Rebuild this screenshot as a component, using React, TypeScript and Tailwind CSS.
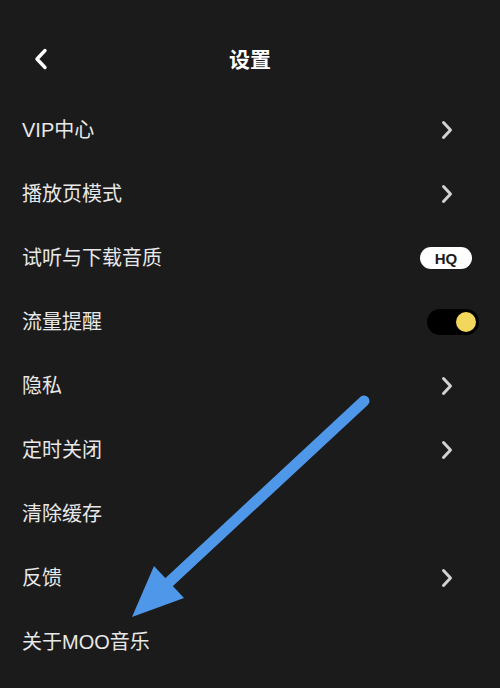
import React from "react";

const Chevron = () => (
  <svg width="12" height="20" viewBox="0 0 12 20" className="mr-[26px]">
    <path d="M2.5 2.5 L9.5 10 L2.5 17.5" fill="none" stroke="#d2d2d2" strokeWidth="3" strokeLinecap="round" strokeLinejoin="round" />
  </svg>
);

type Row = { label: string; right: "chevron" | "hq" | "toggle" | "none" };

const rows: Row[] = [
  { label: "VIP中心", right: "chevron" },
  { label: "播放页模式", right: "chevron" },
  { label: "试听与下载音质", right: "hq" },
  { label: "流量提醒", right: "toggle" },
  { label: "隐私", right: "chevron" },
  { label: "定时关闭", right: "chevron" },
  { label: "清除缓存", right: "none" },
  { label: "反馈", right: "chevron" },
  { label: "关于MOO音乐", right: "none" },
];

export default function App() {
  return (
    <div
      className="relative w-[500px] h-[688px] overflow-hidden bg-[#1b1b1b] text-[#e8e8e8]"
      style={{ fontFamily: '"Liberation Sans", "Noto Sans CJK SC", sans-serif' }}
    >
      <div className="mt-[20px] h-[78px] grid grid-cols-[1fr_auto_1fr] items-center">
        <div className="pl-[34px] flex items-center">
          <svg width="14" height="22" viewBox="0 0 14 22">
            <path d="M11 2.5 L3 11 L11 19.5" fill="none" stroke="#ffffff" strokeWidth="3.4" strokeLinecap="round" strokeLinejoin="round" />
          </svg>
        </div>
        <div className="text-[21px] font-bold text-white leading-none">设置</div>
        <div />
      </div>
      <div className="flex flex-col">
        {rows.map((r) => (
          <div key={r.label} className="h-[64px] flex items-center justify-between pl-[22px] pr-[21px]">
            <span className="text-[20px] leading-none">{r.label}</span>
            {r.right === "chevron" && <Chevron />}
            {r.right === "hq" && (
              <div className="mr-[7px] w-[52px] h-[22px] rounded-full bg-white flex items-center justify-center text-[15px] font-bold text-[#1b1b1b] leading-none">
                HQ
              </div>
            )}
            {r.right === "toggle" && (
              <div className="w-[52px] h-[26px] rounded-full bg-black flex items-center justify-end pr-[3px]">
                <div className="w-[20px] h-[20px] rounded-full bg-[#f2d75c]" />
              </div>
            )}
          </div>
        ))}
      </div>
      <svg className="absolute inset-0 pointer-events-none" width="500" height="688" viewBox="0 0 500 688">
        <line x1="364" y1="401" x2="166" y2="585" stroke="#4f97e9" strokeWidth="11" strokeLinecap="round" />
        <polygon points="132,617 154,566 184,598" fill="#4f97e9" />
      </svg>
    </div>
  );
}
